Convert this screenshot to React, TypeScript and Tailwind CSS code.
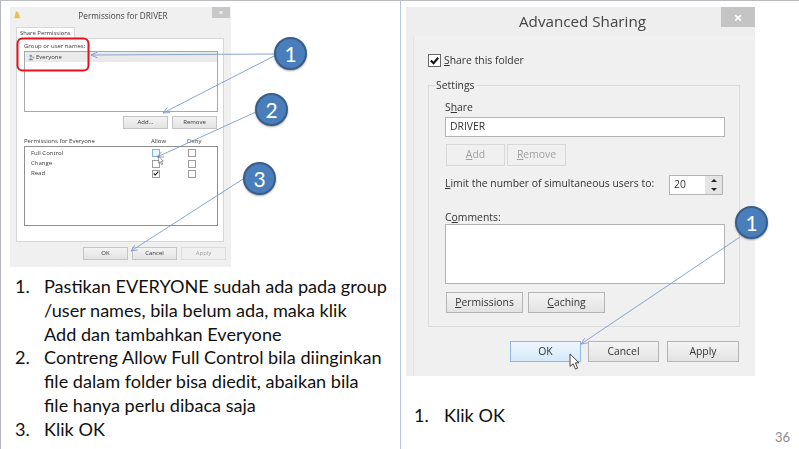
import React from "react";

const seg = { fontFamily: '"Open Sans", "Noto Sans", sans-serif' };

function SmallBtn({ label, disabled, cls }: { label: string; disabled?: boolean; cls: string }) {
  return (
    <div
      className={`flex h-[13px] w-[45px] items-center justify-center border border-[#c4c4c4] text-[6px] ${
        disabled ? "border-[#dcdcdc] text-[#a3a3a3]" : "bg-gradient-to-b from-[#f3f3f3] to-[#e3e3e3] text-[#333]"
      } ${cls}`}
    >
      {label}
    </div>
  );
}

function SmallCheck({ checked, hot }: { checked?: boolean; hot?: boolean }) {
  return (
    <div
      className={`flex h-[8px] w-[8px] items-center justify-center border ${
        hot ? "border-[#7fb2e6] bg-[#eef6fd]" : "border-[#9c9c9c] bg-white"
      }`}
    >
      {checked && (
        <svg viewBox="0 0 8 8" className="h-[7px] w-[7px]">
          <path d="M1 4 L3 6 L7 1.5" fill="none" stroke="#111" strokeWidth="1.5" />
        </svg>
      )}
    </div>
  );
}

function PermRow({ label, allow, hot }: { label: string; allow?: boolean; hot?: boolean }) {
  return (
    <div className="flex h-[10.4px] items-center text-[6px] text-[#3a3a3a]">
      <span className="w-[127px] pl-[6px]">{label}</span>
      <SmallCheck checked={allow} hot={hot} />
      <span className="w-[28px]" />
      <SmallCheck />
    </div>
  );
}

function LeftDialog() {
  return (
    <div style={seg} className="flex h-[260px] w-[221px] flex-col bg-[#f0f0f0] blur-[0.3px]">
      <div className="flex h-[20px] items-start">
        <svg viewBox="0 0 8 10" className="ml-[4px] mt-[4px] h-[8px] w-[7px] shrink-0">
          <path d="M2 0 L5 2 L7 8 L8 9 L0 9 Z" fill="#e9c14f" />
        </svg>
        <div className="ml-[56px] mt-[0.5px] w-[92px] shrink-0 text-center text-[8.2px] leading-[15px] whitespace-nowrap text-[#444]">
          Permissions for DRIVER
        </div>
        <div className="ml-[43px] flex h-[11px] w-[18px] shrink-0 items-center justify-center bg-[#c8c8c8] text-[7px] leading-none font-bold text-white">
          ×
        </div>
      </div>
      <div className="pl-[6px]">
        <div className="h-[11px] w-[59px] border border-b-0 border-[#d8d8d8] bg-white pl-[3px] text-[5.9px] leading-[10px] whitespace-nowrap text-[#3a3a3a]">
          Share Permissions
        </div>
        <div className="h-[204px] w-[208px] border border-[#d6d6d6] bg-white pt-[2px] pl-[7px]">
          <div className="text-[6px] leading-[10px] text-[#3a3a3a]">Group or user names:</div>
          <div className="h-[61px] w-[194px] border border-[#a8a8a8] bg-white">
            <div className="flex h-[10px] items-center bg-[#eaeaea] pl-[3px] text-[6px] text-[#3a3a3a]">
              <svg viewBox="0 0 10 10" className="mr-[1px] h-[7px] w-[7px]">
                <circle cx="4" cy="3" r="2" fill="#7c9ab5" />
                <path d="M0.5 9 Q4 3 7.5 9 Z" fill="#6c8aa8" />
                <circle cx="7.5" cy="5" r="1.5" fill="#8fb88f" />
              </svg>
              Everyone
            </div>
          </div>
          <div className="mt-[4px] flex w-[194px] justify-end gap-[4px] pr-[1px]">
            <SmallBtn label="Add..." cls="w-[45px]" />
            <SmallBtn label="Remove" cls="w-[45px]" />
          </div>
          <div className="mt-[7px] flex h-[10px] text-[6px] leading-[10px] text-[#3a3a3a]">
            <span className="w-[127px]">Permissions for Everyone</span>
            <span className="w-[36px]">Allow</span>
            <span>Deny</span>
          </div>
          <div className="h-[80px] w-[194px] border border-[#8f8f8f] bg-white pt-[1px]">
            <PermRow label="Full Control" hot />
            <PermRow label="Change" />
            <PermRow label="Read" allow />
          </div>
        </div>
      </div>
      <div className="mt-[5px] flex justify-end gap-[4px] pr-[5px]">
        <SmallBtn label="OK" cls="" />
        <SmallBtn label="Cancel" cls="" />
        <SmallBtn label="Apply" disabled cls="" />
      </div>
    </div>
  );
}

function BigBtn({ children, cls }: { children: React.ReactNode; cls: string }) {
  return (
    <div className={`flex h-[21px] items-center justify-center border text-[10.4px] text-[#333] ${cls}`}>
      {children}
    </div>
  );
}

const normalBtn = "border-[#b4b4b4] bg-gradient-to-b from-[#f4f4f4] to-[#e3e3e3]";

function RightDialog() {
  return (
    <div style={seg} className="flex h-[369px] w-[349px] flex-col bg-[#eeeeee] blur-[0.3px]">
      <div className="flex h-[29px] shrink-0 items-start">
        <div className="ml-[113px] w-[127px] text-center text-[15.2px] leading-[28px] whitespace-nowrap text-[#444]">
          Advanced Sharing
        </div>
        <div className="ml-[75px] flex h-[20px] w-[34px] items-center justify-center bg-[#c4c4c4] text-[15px] leading-none font-bold text-white">
          ×
        </div>
      </div>
      <div className="ml-[7px] flex-1 border-l border-[#e4e4e4] bg-[#f0f0f0] pl-[14px]">
        <div className="mt-[18px] flex h-[13px] items-center">
          <div className="flex h-[13px] w-[13px] items-center justify-center border border-[#666] bg-white">
            <svg viewBox="0 0 12 12" className="h-[11px] w-[11px]">
              <path d="M2 6 L5 9 L10 3" fill="none" stroke="#111" strokeWidth="2.2" />
            </svg>
          </div>
          <span className="ml-[3px] text-[10.4px] whitespace-nowrap text-[#333]">
            <u>S</u>hare this folder
          </span>
        </div>
        <fieldset className="mt-[10px] h-[250px] w-[312px] border border-[#dcdcdc] pl-[16px]">
          <legend className="-ml-[10px] px-[1px] text-[10.4px] leading-[16px] text-[#333]">Settings</legend>
          <div className="mt-[7px] text-[10.4px] leading-[14px] text-[#333]">
            S<u>h</u>are
          </div>
          <div className="mt-[3px] flex h-[20px] w-[280px] items-center border border-[#b4b4b4] bg-white pl-[4px] text-[10.4px] text-[#333]">
            DRIVER
          </div>
          <div className="mt-[7px] ml-[1px] flex">
            <div className="flex h-[22px] w-[59px] items-center justify-center border border-[#d8d8d8] text-[10.4px] text-[#a0a0a0]">
              <u>A</u>dd
            </div>
            <div className="ml-[2px] flex h-[22px] w-[59px] items-center justify-center border border-[#d8d8d8] text-[10.4px] text-[#a0a0a0]">
              <u>R</u>emove
            </div>
          </div>
          <div className="mt-[9px] flex h-[20px] items-center">
            <span className="w-[224px] pb-[2px] text-[10.4px] whitespace-nowrap text-[#333]">
              <u>L</u>imit the number of simultaneous users to:
            </span>
            <div className="flex h-[20px] w-[54px] items-center border border-[#b4b4b4] bg-white">
              <span className="flex-1 pl-[4px] text-[10.4px] text-[#333]">20</span>
              <div className="flex h-full w-[17px] flex-col items-center justify-around bg-[#e4e4e4]">
                <span className="border-x-[3px] border-b-[3px] border-x-transparent border-b-[#222]" />
                <span className="border-x-[3px] border-t-[3px] border-x-transparent border-t-[#222]" />
              </div>
            </div>
          </div>
          <div className="mt-[15px] text-[10.4px] leading-[14px] text-[#333]">
            C<u>o</u>mments:
          </div>
          <div className="h-[60px] w-[280px] border border-[#b4b4b4] bg-white" />
          <div className="mt-[8px] ml-[1px] flex gap-[5px]">
            <BigBtn cls={`w-[77px] ${normalBtn}`}>
              <u>P</u>ermissions
            </BigBtn>
            <BigBtn cls={`w-[77px] ${normalBtn}`}>
              <u>C</u>aching
            </BigBtn>
          </div>
        </fieldset>
        <div className="mt-[14px] flex w-[311px] justify-end">
          <BigBtn cls="mr-[7px] w-[71px] border-[#8fb9e3] bg-gradient-to-b from-[#eef7fe] to-[#d5e9fa]">OK</BigBtn>
          <BigBtn cls={`mr-[8px] w-[71px] ${normalBtn}`}>Cancel</BigBtn>
          <BigBtn cls={`w-[72px] ${normalBtn}`}>Apply</BigBtn>
        </div>
      </div>
    </div>
  );
}

const list = { fontFamily: 'Lato, "Open Sans", sans-serif' };

function Item({ n, children }: { n: number; children: React.ReactNode }) {
  return (
    <div className="flex">
      <span className="w-[29px] shrink-0">{n}.</span>
      <span className="whitespace-nowrap">{children}</span>
    </div>
  );
}

function Bubble({ n, cls }: { n: number; cls: string }) {
  return (
    <div
      style={list}
      className={`absolute flex h-[33px] w-[33px] items-center justify-center rounded-full border-2 border-[#385d8a] bg-[#4a7ebb] text-[21px] text-white shadow-[0_1px_2px_rgba(0,0,0,0.35)] ${cls}`}
    >
      {n}
    </div>
  );
}

function Cursor({ cls }: { cls: string }) {
  return (
    <svg viewBox="0 0 12 19" className={`absolute ${cls}`}>
      <path
        d="M1 1 L1 15 L4.5 12 L7 18 L9.5 17 L7 11 L11 11 Z"
        fill="#fff"
        stroke="#333"
        strokeWidth="1"
        strokeLinejoin="round"
      />
    </svg>
  );
}

function Arrow({ x1, y1, x2, y2 }: { x1: number; y1: number; x2: number; y2: number }) {
  const a = Math.atan2(y1 - y2, x1 - x2);
  const s = 7;
  const p = (d: number) => `${x2 + s * Math.cos(a + d)} ${y2 + s * Math.sin(a + d)}`;
  return (
    <g fill="none" stroke="#7d9ccb" strokeWidth="0.9">
      <line x1={x1} y1={y1} x2={x2} y2={y2} />
      <path d={`M${p(0.42)} L${x2} ${y2} L${p(-0.42)}`} />
    </g>
  );
}

export default function App() {
  return (
    <div className="relative flex h-[449px] w-[799px] overflow-hidden border-t border-t-[#b9bdc2] bg-white">
      <div className="flex h-full w-[401px] shrink-0 flex-col border-x border-l-[#b5b9bd] border-r-[#b4c7dc] pt-[6px] pl-[9px]">
        <LeftDialog />
        <div style={list} className="mt-[8px] ml-[5px] text-[18.1px] leading-[23.8px] text-[#111]">
          <Item n={1}>
            Pastikan EVERYONE sudah ada pada group
            <br />
            /user names, bila belum ada, maka klik
            <br />
            Add dan tambahkan Everyone
          </Item>
          <Item n={2}>
            Contreng Allow Full Control bila diinginkan
            <br />
            file dalam folder bisa diedit, abaikan bila
            <br />
            file hanya perlu dibaca saja
          </Item>
          <Item n={3}>Klik OK</Item>
        </div>
      </div>
      <div className="flex h-full flex-1 flex-col pt-[6px] pl-[5px]">
        <RightDialog />
        <div style={list} className="mt-[27px] ml-[8px] text-[18.1px] leading-[24px] text-[#111]">
          <div className="flex">
            <span className="w-[30px]">1.</span>
            <span>Klik OK</span>
          </div>
        </div>
        <div style={list} className="mt-[2px] pr-[9px] text-right text-[13px] leading-[16px] text-[#8a8a8a]">
          36
        </div>
      </div>

      <svg className="absolute inset-0 h-[449px] w-[799px]" viewBox="0 0 799 449">
        <rect x="17.5" y="37.5" width="71" height="32" rx="5" fill="none" stroke="#e5121c" strokeWidth="2" />
        <Arrow x1={275} y1={53} x2={91} y2={54} />
        <Arrow x1={274} y1={55} x2={163} y2={112} />
        <Arrow x1={256} y1={111} x2={157} y2={156} />
        <Arrow x1={243} y1={178} x2={131} y2={250} />
        <Arrow x1={740} y1={236} x2={581} y2={343} />
      </svg>
      <Cursor cls="left-[158px] top-[155px] h-[9px] w-[6px]" />
      <Cursor cls="left-[569px] top-[352px] h-[17px] w-[11px]" />
      <Bubble n={1} cls="left-[274px] top-[36px]" />
      <Bubble n={2} cls="left-[255px] top-[92px]" />
      <Bubble n={3} cls="left-[243px] top-[161px]" />
      <Bubble n={1} cls="left-[735px] top-[205px]" />
    </div>
  );
}
